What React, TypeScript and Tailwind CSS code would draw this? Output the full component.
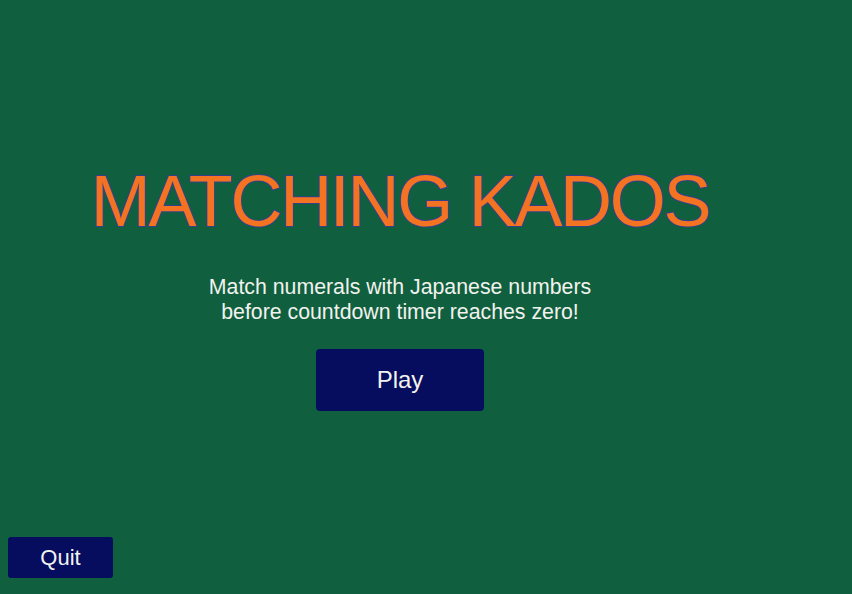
export default function App() {
  return (
    <div className="flex h-[594px] w-[852px] flex-col bg-[#10603f] font-['Liberation_Sans',Arial,sans-serif]">
      <main className="flex w-[800px] flex-1 flex-col items-center pt-[165px]">
        <h1 className="text-[72px] leading-none tracking-[-2.3px] text-[#f47323] [-webkit-text-stroke:2px_#34418a] [paint-order:stroke_fill]">
          MATCHING KADOS
        </h1>
        <p className="mt-[38px] text-center text-[21.3px] leading-[25px] text-[#f2f2ee]">
          Match numerals with Japanese numbers
          <br />
          before countdown timer reaches zero!
        </p>
        <button className="mt-[24px] flex h-[62px] w-[168px] items-center justify-center rounded-[4px] bg-[#060c5e] text-[24px] text-[#f2f2ee]">
          Play
        </button>
      </main>
      <footer className="px-[8px] pb-[16px]">
        <button className="flex h-[41px] w-[105px] items-center justify-center rounded-[3px] bg-[#060c5e] text-[22px] text-[#f2f2ee]">
          Quit
        </button>
      </footer>
    </div>
  );
}
